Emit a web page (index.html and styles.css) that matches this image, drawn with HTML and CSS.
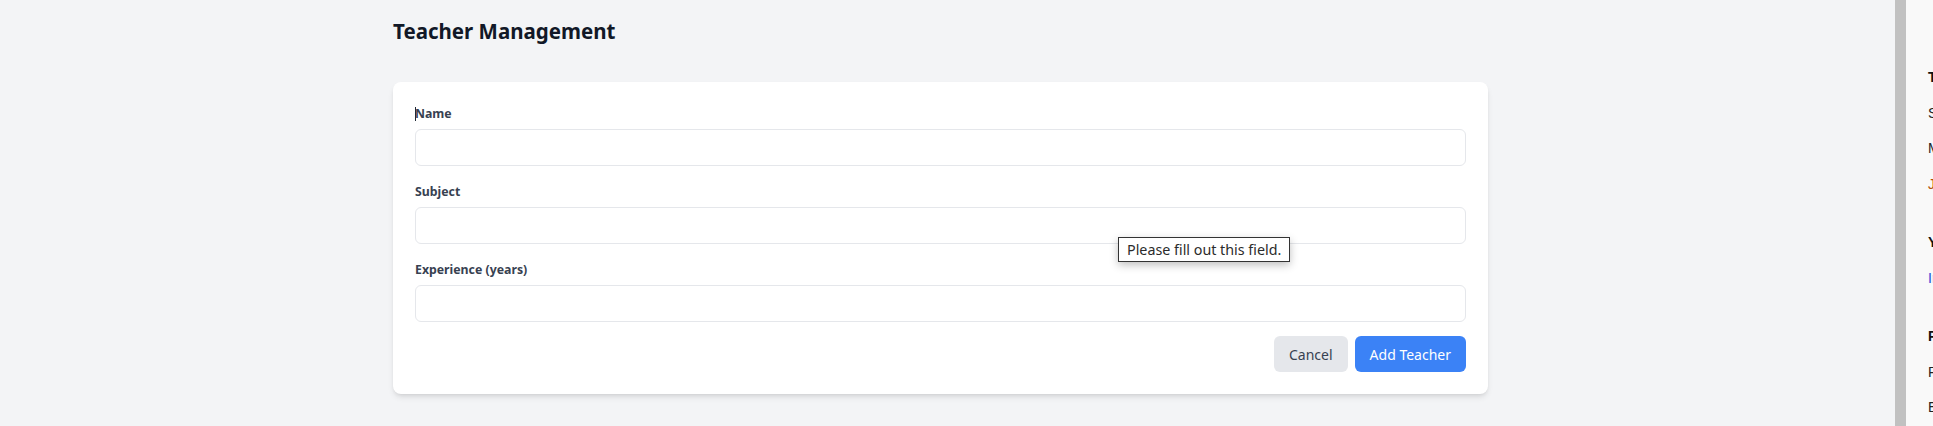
FILE: index.html
```html
<!DOCTYPE html>
<html lang="en">
<head>
<meta charset="utf-8">
<title>Teacher Management</title>
<link rel="stylesheet" href="styles.css">
</head>
<body>
<div class="layout">
  <main class="main">
    <h1 class="title">Teacher Management</h1>
    <form class="card">
      <div class="field">
        <label class="label label-first">Name<span class="caret"></span></label>
        <input class="input" type="text">
      </div>
      <div class="field">
        <label class="label">Subject</label>
        <input class="input" type="text">
        <div class="tooltip">Please fill out this field.</div>
      </div>
      <div class="field">
        <label class="label">Experience (years)</label>
        <input class="input" type="text">
      </div>
      <div class="actions">
        <button type="button" class="btn btn-cancel">Cancel</button>
        <button type="button" class="btn btn-primary">Add Teacher</button>
      </div>
    </form>
  </main>
  <div class="scrollbar"></div>
  <aside class="side">
    <div class="group">
      <div class="side-head">Teachers</div>
      <div class="side-item">Subjects</div>
      <div class="side-item">Manage</div>
      <div class="side-item side-orange">Join</div>
    </div>
    <div class="group">
      <div class="side-head">Your account</div>
      <div class="side-item side-blue">Info</div>
    </div>
    <div class="group">
      <div class="side-head">Preferences</div>
      <div class="side-item">Profile</div>
      <div class="side-item">Exit</div>
    </div>
  </aside>
</div>
</body>
</html>
```

FILE: styles.css
```css
* { box-sizing: border-box; }
html, body { margin: 0; padding: 0; }
body {
  background: #f3f4f6;
  font-family: "Noto Sans", "Open Sans", sans-serif;
  height: 426px;
  overflow: hidden;
}
.layout {
  display: flex;
  height: 426px;
}
.main {
  flex: 1;
  padding: 17px 0 0 393px;
}
.title {
  margin: 0;
  font-size: 20.5px;
  line-height: 28px;
  font-weight: 700;
  color: #111827;
}
.card {
  margin-top: 37px;
  width: 1095px;
  background: #ffffff;
  border-radius: 8px;
  box-shadow: 0 4px 6px -1px rgba(0,0,0,0.1), 0 2px 4px -2px rgba(0,0,0,0.1);
  padding: 22px 22px 22px;
  display: flex;
  flex-direction: column;
}
.field {
  display: flex;
  flex-direction: column;
  gap: 5px;
  position: relative;
}
.field + .field { margin-top: 16px; }
.label {
  font-size: 12.3px;
  line-height: 20px;
  font-weight: 700;
  color: #374151;
  position: relative;
}
.caret {
  position: absolute;
  left: 0;
  top: 3px;
  width: 1px;
  height: 14px;
  background: #1f2937;
}
.input {
  height: 37px;
  border: 1px solid #e5e7eb;
  border-radius: 6px;
  background: #fff;
  font: inherit;
  outline: none;
}
.tooltip {
  position: absolute;
  left: 703px;
  top: 55px;
  background: #fff;
  border: 1px solid #333;
  box-shadow: 0 3px 8px rgba(0,0,0,0.25);
  padding: 2px 8px;
  font-size: 14.3px;
  line-height: 19px;
  color: #2b2b2b;
  white-space: nowrap;
  z-index: 2;
}
.actions {
  margin-top: 14px;
  display: flex;
  justify-content: flex-end;
  gap: 7px;
}
.btn {
  height: 36px;
  border: none;
  border-radius: 6px;
  padding: 0 15px;
  font-family: inherit;
  font-size: 14px;
  cursor: pointer;
}
.btn-cancel {
  background: #e5e7eb;
  color: #374151;
}
.btn-primary {
  background: #3b82f6;
  color: #ffffff;
}
.scrollbar {
  width: 11px;
  margin-left: 2px;
  background: #c1c1c1;
}
.side {
  width: 27px;
  background: #f9f9f9;
  overflow: hidden;
  padding: 60px 0 0 22px;
  font-family: "Liberation Sans", Arial, sans-serif;
  font-size: 14px;
  color: #222;
  white-space: nowrap;
}
.group { margin-bottom: 23px; }
.side-head, .side-item { line-height: 35.5px; }
.side-head { font-weight: 700; color: #111; }
.side-orange { color: #b45309; }
.side-blue { color: #1d4ed8; }
```
